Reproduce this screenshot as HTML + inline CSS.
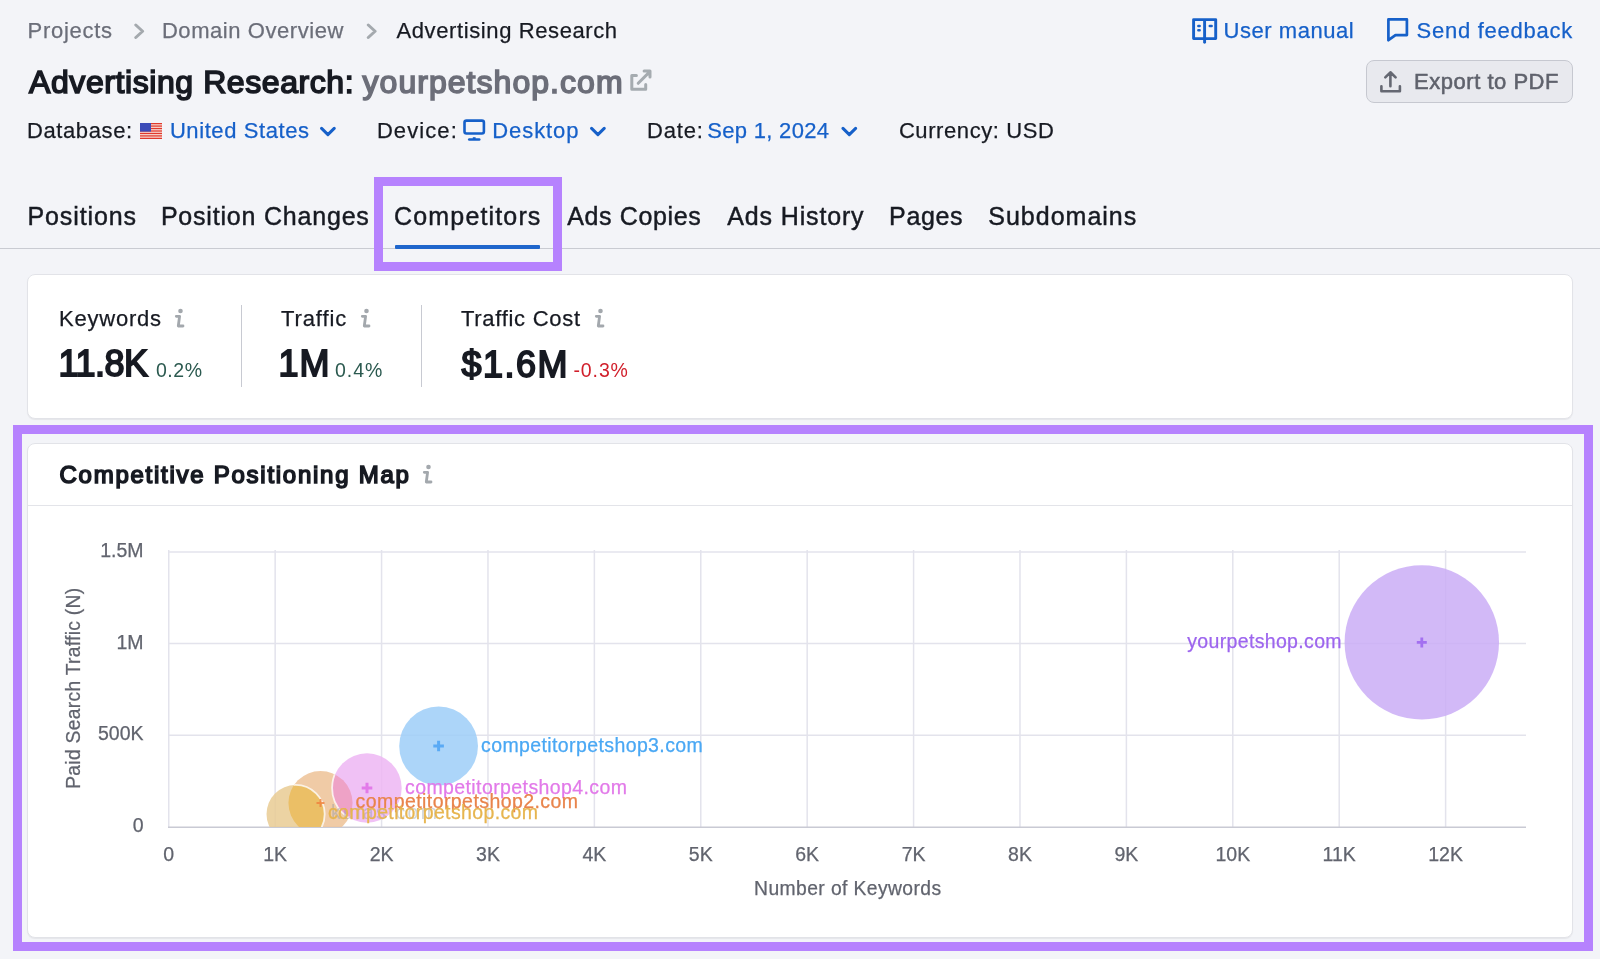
<!DOCTYPE html><html><head><meta charset="utf-8"><style>
*{margin:0;padding:0;box-sizing:border-box}
html,body{width:1600px;height:959px;overflow:hidden;background:#f3f4f8;font-family:"Liberation Sans",sans-serif}
.t{position:absolute;white-space:nowrap}
.r{-webkit-text-stroke:0.25px currentColor}
.abs{position:absolute}
svg{position:absolute;overflow:visible}
</style></head><body><div id="root" style="position:absolute;left:0;top:0;width:1600px;height:959px;will-change:transform">
<div id="bc1" class="t r" style="left:27.50px;top:19.70px;font-size:22px;line-height:22px;color:#6b6e79;font-weight:400;letter-spacing:0.714px;">Projects</div>
<div id="bc2" class="t r" style="left:161.90px;top:19.70px;font-size:22px;line-height:22px;color:#6b6e79;font-weight:400;letter-spacing:0.571px;">Domain Overview</div>
<div id="bc3" class="t r" style="left:396.50px;top:19.70px;font-size:22px;line-height:22px;color:#171a22;font-weight:400;letter-spacing:0.605px;">Advertising Research</div>
<svg style="left:0;top:0" width="1600" height="60"><path d="M135.8 25L142.6 31.25L135.8 37.5M368.3 25L375.1 31.25L368.3 37.5" fill="none" stroke="#a4a9ae" stroke-width="3" stroke-linecap="round" stroke-linejoin="round"/></svg>
<div id="ti1" class="t" style="left:29.00px;top:65.89px;font-size:32px;line-height:32px;color:#171a22;font-weight:400;letter-spacing:0.58px;-webkit-text-stroke:1.6px #171a22;">Advertising Research:</div>
<div id="ti2" class="t" style="left:362.50px;top:65.89px;font-size:32px;line-height:32px;color:#6c6e79;font-weight:400;letter-spacing:1.041px;-webkit-text-stroke:1.6px #6c6e79;">yourpetshop.com</div>
<svg style="left:0;top:0" width="700" height="100"><path d="M636.4 75.5H631.8V89.2H645.7V84.6M638.2 83.3L649.6 71.9M644.1 71.1H650V77" fill="none" stroke="#a5abb0" stroke-width="3" stroke-linecap="round" stroke-linejoin="round"/></svg>
<svg style="left:0;top:0" width="1600" height="110"><path d="M1193.6 19.6H1204.6V38.6H1193.6Z M1204.6 19.6H1215.7V38.6H1204.6Z" fill="none" stroke="#1660c9" stroke-width="2.9" stroke-linejoin="round"/><path d="M1204.6 39V42.3" stroke="#1660c9" stroke-width="2.9" stroke-linecap="round"/><path d="M1198.4 26H1199.6M1198.4 30.3H1199.6M1209.8 26H1211.6" stroke="#1660c9" stroke-width="2.6" stroke-linecap="round"/><path d="M1388.4 19.4H1406.9V35.1H1395.5L1388.4 40.2Z" fill="none" stroke="#1660c9" stroke-width="2.7" stroke-linejoin="round"/></svg>
<div id="um" class="t r" style="left:1223.50px;top:19.68px;font-size:22px;line-height:22px;color:#1660c9;font-weight:400;letter-spacing:0.55px;">User manual</div>
<div id="sf" class="t r" style="left:1416.50px;top:19.68px;font-size:22px;line-height:22px;color:#1660c9;font-weight:400;letter-spacing:0.749px;">Send feedback</div>
<div class="abs" style="left:1366px;top:60px;width:207px;height:43px;border:1px solid #c6c8d0;border-radius:8px;background:#e8e9ee"></div>
<svg style="left:0;top:0" width="1600" height="110"><path d="M1381.4 86.2V91.3H1399.9V86.2M1390.4 72.8V86.3M1385.3 77.4L1390.4 72.3L1395.6 77.4" fill="none" stroke="#656872" stroke-width="2.6" stroke-linecap="round" stroke-linejoin="round"/></svg>
<div id="ex" class="t r" style="left:1414.10px;top:70.60px;font-size:22px;line-height:22px;color:#5f626c;font-weight:400;letter-spacing:0.518px;-webkit-text-stroke:0.55px #5f626c;">Export to PDF</div>
<div id="db1" class="t r" style="left:26.90px;top:119.97px;font-size:22px;line-height:22px;color:#171a22;font-weight:400;letter-spacing:0.625px;">Database:</div>
<div id="db2" class="t r" style="left:169.90px;top:119.97px;font-size:22px;line-height:22px;color:#1660c9;font-weight:400;letter-spacing:0.583px;">United States</div>
<div id="dv1" class="t r" style="left:376.90px;top:119.97px;font-size:22px;line-height:22px;color:#171a22;font-weight:400;letter-spacing:1.084px;">Device:</div>
<div id="dv2" class="t r" style="left:492.30px;top:119.97px;font-size:22px;line-height:22px;color:#1660c9;font-weight:400;letter-spacing:0.916px;">Desktop</div>
<div id="dt1" class="t r" style="left:646.90px;top:119.97px;font-size:22px;line-height:22px;color:#171a22;font-weight:400;letter-spacing:0.875px;">Date:</div>
<div id="dt2" class="t r" style="left:707.30px;top:119.97px;font-size:22px;line-height:22px;color:#1660c9;font-weight:400;letter-spacing:0.3px;">Sep 1, 2024</div>
<div id="cu" class="t r" style="left:898.90px;top:119.97px;font-size:22px;line-height:22px;color:#171a22;font-weight:400;letter-spacing:0.584px;">Currency: USD</div>
<svg style="left:140px;top:123px" width="22" height="16" viewBox="0 0 22 16"><rect width="22" height="16" fill="#f7d9d2"/><rect x="0" y="0.000" width="22" height="1.231" fill="#e0382c"/><rect x="0" y="2.462" width="22" height="1.231" fill="#e0382c"/><rect x="0" y="4.923" width="22" height="1.231" fill="#e0382c"/><rect x="0" y="7.385" width="22" height="1.231" fill="#e0382c"/><rect x="0" y="9.846" width="22" height="1.231" fill="#e0382c"/><rect x="0" y="12.308" width="22" height="1.231" fill="#e0382c"/><rect x="0" y="14.769" width="22" height="1.231" fill="#e0382c"/><rect width="11" height="8.6" fill="#3b4bb8"/></svg>
<svg style="left:0;top:0" width="1600" height="160"><rect x="464.5" y="120.6" width="19.4" height="12.9" rx="2" fill="none" stroke="#1660c9" stroke-width="2.6"/><path d="M469.3 139.5H479.2" stroke="#1660c9" stroke-width="2.7" stroke-linecap="round"/><path d="M474.2 137.2V139.5" stroke="#1660c9" stroke-width="2.8"/><path d="M321.6 128.4L327.9 134.6L334.2 128.4M591.6 128.4L597.9 134.6L604.2 128.4M843 128.4L849.3 134.6L855.6 128.4" fill="none" stroke="#1660c9" stroke-width="3" stroke-linecap="round" stroke-linejoin="round"/></svg>
<div id="tb1" class="t" style="left:27.50px;top:204.21px;font-size:25px;line-height:25px;color:#171a22;font-weight:500;letter-spacing:0.875px;-webkit-text-stroke:0.45px #171a22;">Positions</div>
<div id="tb2" class="t" style="left:160.90px;top:204.21px;font-size:25px;line-height:25px;color:#171a22;font-weight:500;letter-spacing:0.8px;-webkit-text-stroke:0.45px #171a22;">Position Changes</div>
<div id="tb3" class="t" style="left:394.10px;top:204.21px;font-size:25px;line-height:25px;color:#171a22;font-weight:500;letter-spacing:1.15px;-webkit-text-stroke:0.45px #171a22;">Competitors</div>
<div id="tb4" class="t" style="left:567.30px;top:204.21px;font-size:25px;line-height:25px;color:#171a22;font-weight:500;letter-spacing:0.613px;-webkit-text-stroke:0.45px #171a22;">Ads Copies</div>
<div id="tb5" class="t" style="left:727.30px;top:204.21px;font-size:25px;line-height:25px;color:#171a22;font-weight:500;letter-spacing:0.85px;-webkit-text-stroke:0.45px #171a22;">Ads History</div>
<div id="tb6" class="t" style="left:889.10px;top:203.80px;font-size:25px;line-height:25px;color:#171a22;font-weight:500;letter-spacing:0.625px;-webkit-text-stroke:0.45px #171a22;">Pages</div>
<div id="tb7" class="t" style="left:988.30px;top:204.21px;font-size:25px;line-height:25px;color:#171a22;font-weight:500;letter-spacing:0.998px;-webkit-text-stroke:0.45px #171a22;">Subdomains</div>
<div class="abs" style="left:0;top:248px;width:1600px;height:1px;background:#c9cbd2"></div>
<div class="abs" style="left:395px;top:245px;width:145px;height:4px;background:#1f66cc;border-radius:1px"></div>
<div class="abs" style="left:374px;top:177px;width:188px;height:94px;border:9px solid #b682fe"></div>
<div class="abs" style="left:27px;top:274px;width:1546px;height:145px;background:#fff;border:1px solid #e2e3e8;border-radius:8px;box-shadow:0 1px 1px rgba(0,0,0,0.06)"></div>
<div id="k1" class="t r" style="left:59.10px;top:307.86px;font-size:22px;line-height:22px;color:#171a22;font-weight:400;letter-spacing:0.75px;">Keywords</div>
<div id="k2" class="t r" style="left:281.00px;top:307.86px;font-size:22px;line-height:22px;color:#171a22;font-weight:400;letter-spacing:0.875px;">Traffic</div>
<div id="k3" class="t r" style="left:461.00px;top:307.86px;font-size:22px;line-height:22px;color:#171a22;font-weight:400;letter-spacing:0.704px;">Traffic Cost</div>
<div id="v1" class="t" style="left:58.50px;top:346.19px;font-size:36px;line-height:36px;color:#171a22;font-weight:400;letter-spacing:-0.45px;-webkit-text-stroke:1.8px #171a22;">11.8K</div>
<div id="v2" class="t" style="left:278.50px;top:346.19px;font-size:36px;line-height:36px;color:#171a22;font-weight:400;letter-spacing:1.0px;-webkit-text-stroke:1.8px #171a22;">1M</div>
<div id="v3" class="t" style="left:461.50px;top:347.19px;font-size:36px;line-height:36px;color:#171a22;font-weight:400;letter-spacing:1.496px;-webkit-text-stroke:1.8px #171a22;">$1.6M</div>
<div id="p1" class="t" style="left:155.90px;top:360.52px;font-size:19.5px;line-height:19.5px;color:#2c5a50;font-weight:400;letter-spacing:0.584px;">0.2%</div>
<div id="p2" class="t" style="left:335.00px;top:360.52px;font-size:19.5px;line-height:19.5px;color:#2c5a50;font-weight:400;letter-spacing:1.0px;">0.4%</div>
<div id="p3" class="t" style="left:573.50px;top:360.52px;font-size:19.5px;line-height:19.5px;color:#d11f2b;font-weight:400;letter-spacing:0.875px;">-0.3%</div>
<div class="abs" style="left:240.5px;top:305px;width:1.5px;height:82px;background:#c8cad2"></div>
<div class="abs" style="left:420.5px;top:305px;width:1.5px;height:82px;background:#c8cad2"></div>
<svg style="left:0;top:0" width="1600" height="500"><path d="M176.3 316.3H179.6L178.3 326.0H183.0" fill="none" stroke="#a3a8ad" stroke-width="2.8" stroke-linecap="round" stroke-linejoin="round"/><circle cx="180.5" cy="311.0" r="2.3" fill="#a3a8ad"/><path d="M362.3 316.3H365.6L364.3 326.0H369.0" fill="none" stroke="#a3a8ad" stroke-width="2.8" stroke-linecap="round" stroke-linejoin="round"/><circle cx="366.5" cy="311.0" r="2.3" fill="#a3a8ad"/><path d="M596.3 316.3H599.6L598.3 326.0H603.0" fill="none" stroke="#a3a8ad" stroke-width="2.8" stroke-linecap="round" stroke-linejoin="round"/><circle cx="600.5" cy="311.0" r="2.3" fill="#a3a8ad"/></svg>
<div class="abs" style="left:12.5px;top:425px;width:1580px;height:526px;border:9px solid #b682fe"></div>
<div class="abs" style="left:27px;top:443px;width:1546px;height:495px;background:#fff;border:1px solid #e2e3e8;border-radius:8px;box-shadow:0 1px 1px rgba(0,0,0,0.06)"></div>
<div class="abs" style="left:28px;top:504.5px;width:1544px;height:1px;background:#e3e4e9"></div>
<svg style="left:0;top:0" width="1600" height="500"><path d="M424.3 472.3H427.6L426.3 482.0H431.0" fill="none" stroke="#a3a8ad" stroke-width="2.8" stroke-linecap="round" stroke-linejoin="round"/><circle cx="428.5" cy="467.0" r="2.3" fill="#a3a8ad"/></svg>
<div id="ct" class="t" style="left:59.50px;top:463.40px;font-size:24px;line-height:24px;color:#171a22;font-weight:400;letter-spacing:1.738px;-webkit-text-stroke:1.6px #171a22;">Competitive Positioning Map</div>
<svg style="left:0;top:0" width="1600" height="959"><line x1="168.75" y1="550" x2="168.75" y2="827" stroke="#e3e3ec" stroke-width="1.5"/><line x1="275.15" y1="550" x2="275.15" y2="827" stroke="#e3e3ec" stroke-width="1.5"/><line x1="381.56" y1="550" x2="381.56" y2="827" stroke="#e3e3ec" stroke-width="1.5"/><line x1="487.97" y1="550" x2="487.97" y2="827" stroke="#e3e3ec" stroke-width="1.5"/><line x1="594.37" y1="550" x2="594.37" y2="827" stroke="#e3e3ec" stroke-width="1.5"/><line x1="700.77" y1="550" x2="700.77" y2="827" stroke="#e3e3ec" stroke-width="1.5"/><line x1="807.18" y1="550" x2="807.18" y2="827" stroke="#e3e3ec" stroke-width="1.5"/><line x1="913.59" y1="550" x2="913.59" y2="827" stroke="#e3e3ec" stroke-width="1.5"/><line x1="1019.99" y1="550" x2="1019.99" y2="827" stroke="#e3e3ec" stroke-width="1.5"/><line x1="1126.39" y1="550" x2="1126.39" y2="827" stroke="#e3e3ec" stroke-width="1.5"/><line x1="1232.80" y1="550" x2="1232.80" y2="827" stroke="#e3e3ec" stroke-width="1.5"/><line x1="1339.20" y1="550" x2="1339.20" y2="827" stroke="#e3e3ec" stroke-width="1.5"/><line x1="1445.61" y1="550" x2="1445.61" y2="827" stroke="#e3e3ec" stroke-width="1.5"/><line x1="168" y1="735.30" x2="1526" y2="735.30" stroke="#e3e3ec" stroke-width="1.5"/><line x1="168" y1="643.60" x2="1526" y2="643.60" stroke="#e3e3ec" stroke-width="1.5"/><line x1="168" y1="551.90" x2="1526" y2="551.90" stroke="#e3e3ec" stroke-width="1.5"/><line x1="168" y1="827.2" x2="1526" y2="827.2" stroke="#c9cad4" stroke-width="1.6"/><g font-family="Liberation Sans" font-size="19.5" fill="#61646e" stroke="#61646e" stroke-width="0.25"><text x="168.75" y="860.5" text-anchor="middle">0</text><text x="275.15" y="860.5" text-anchor="middle">1K</text><text x="381.56" y="860.5" text-anchor="middle">2K</text><text x="487.97" y="860.5" text-anchor="middle">3K</text><text x="594.37" y="860.5" text-anchor="middle">4K</text><text x="700.77" y="860.5" text-anchor="middle">5K</text><text x="807.18" y="860.5" text-anchor="middle">6K</text><text x="913.59" y="860.5" text-anchor="middle">7K</text><text x="1019.99" y="860.5" text-anchor="middle">8K</text><text x="1126.39" y="860.5" text-anchor="middle">9K</text><text x="1232.80" y="860.5" text-anchor="middle">10K</text><text x="1339.20" y="860.5" text-anchor="middle">11K</text><text x="1445.61" y="860.5" text-anchor="middle">12K</text><text x="143.5" y="832.10" text-anchor="end">0</text><text x="143.5" y="740.40" text-anchor="end">500K</text><text x="143.5" y="648.70" text-anchor="end">1M</text><text x="143.5" y="557.00" text-anchor="end">1.5M</text><text x="847.6" y="894.8" text-anchor="middle" font-size="19.3" textLength="187" lengthAdjust="spacing">Number of Keywords</text><text transform="translate(79.5,688.3) rotate(-90)" text-anchor="middle" font-size="19.3" textLength="201" lengthAdjust="spacing">Paid Search Traffic (N)</text></g><defs><clipPath id="cp"><rect x="150" y="540" width="1400" height="287"/></clipPath><clipPath id="cOr"><circle cx="320.5" cy="803" r="32"/></clipPath></defs><g clip-path="url(#cp)"><circle cx="320.5" cy="803" r="32" fill="#edc297" fill-opacity="0.85" /><circle cx="295.5" cy="814" r="29" fill="#e9cb93" fill-opacity="0.85" /><circle cx="295.5" cy="814" r="29" fill="#ebbf66" clip-path="url(#cOr)"/><circle cx="295.5" cy="814" r="29.2" fill="none" stroke="#fff" stroke-opacity="0.75" stroke-width="1.8" clip-path="url(#cOr)"/><circle cx="367" cy="788" r="34.7" fill="#edb6f3" fill-opacity="0.85" /><circle cx="367" cy="788" r="34.7" fill="#eea2c6" clip-path="url(#cOr)"/><circle cx="367" cy="788" r="34.900000000000006" fill="none" stroke="#fff" stroke-opacity="0.75" stroke-width="1.8" clip-path="url(#cOr)"/><circle cx="438.6" cy="746" r="39.4" fill="#9dcef8" fill-opacity="0.85" /><circle cx="1421.8" cy="642.4" r="77.2" fill="#caadf6" fill-opacity="0.85" /><path d="M316.5 803H324.5M320.5 799.0V807.0" stroke="#f07f3c" stroke-width="2" stroke-opacity="0.8"/><path d="M361.7 788H372.3M367 782.7V793.3" stroke="#e27ae9" stroke-width="3" stroke-opacity="1"/><path d="M433.3 746H443.9M438.6 740.7V751.3" stroke="#5aaaf5" stroke-width="3" stroke-opacity="1"/><path d="M1416.8 642.4H1426.8M1421.8 637.4V647.4" stroke="#a370f0" stroke-width="2.8" stroke-opacity="1"/></g><g font-family="Liberation Sans" font-size="19.5" stroke-width="0.25"><text x="1341.6" y="647.9" text-anchor="end" fill="#9d65ee" stroke="#9d65ee" textLength="154.4" lengthAdjust="spacing">yourpetshop.com</text><text x="481" y="751.9" fill="#4aa8f4" stroke="#4aa8f4" textLength="221.8" lengthAdjust="spacing">competitorpetshop3.com</text><text x="331" y="819" fill="#8a95a3" fill-opacity="0.4" textLength="106" lengthAdjust="spacing">kulas.com</text><text x="405" y="794" fill="#e27ae9" stroke="#e27ae9" textLength="222" lengthAdjust="spacing">competitorpetshop4.com</text><text x="355.6" y="808" fill="#e9844c" stroke="#e9844c" textLength="222.4" lengthAdjust="spacing">competitorpetshop2.com</text><text x="328" y="819" fill="#e7b54f" stroke="#e7b54f" textLength="210" lengthAdjust="spacing">competitorpetshop.com</text></g></svg>
</div></body></html>
